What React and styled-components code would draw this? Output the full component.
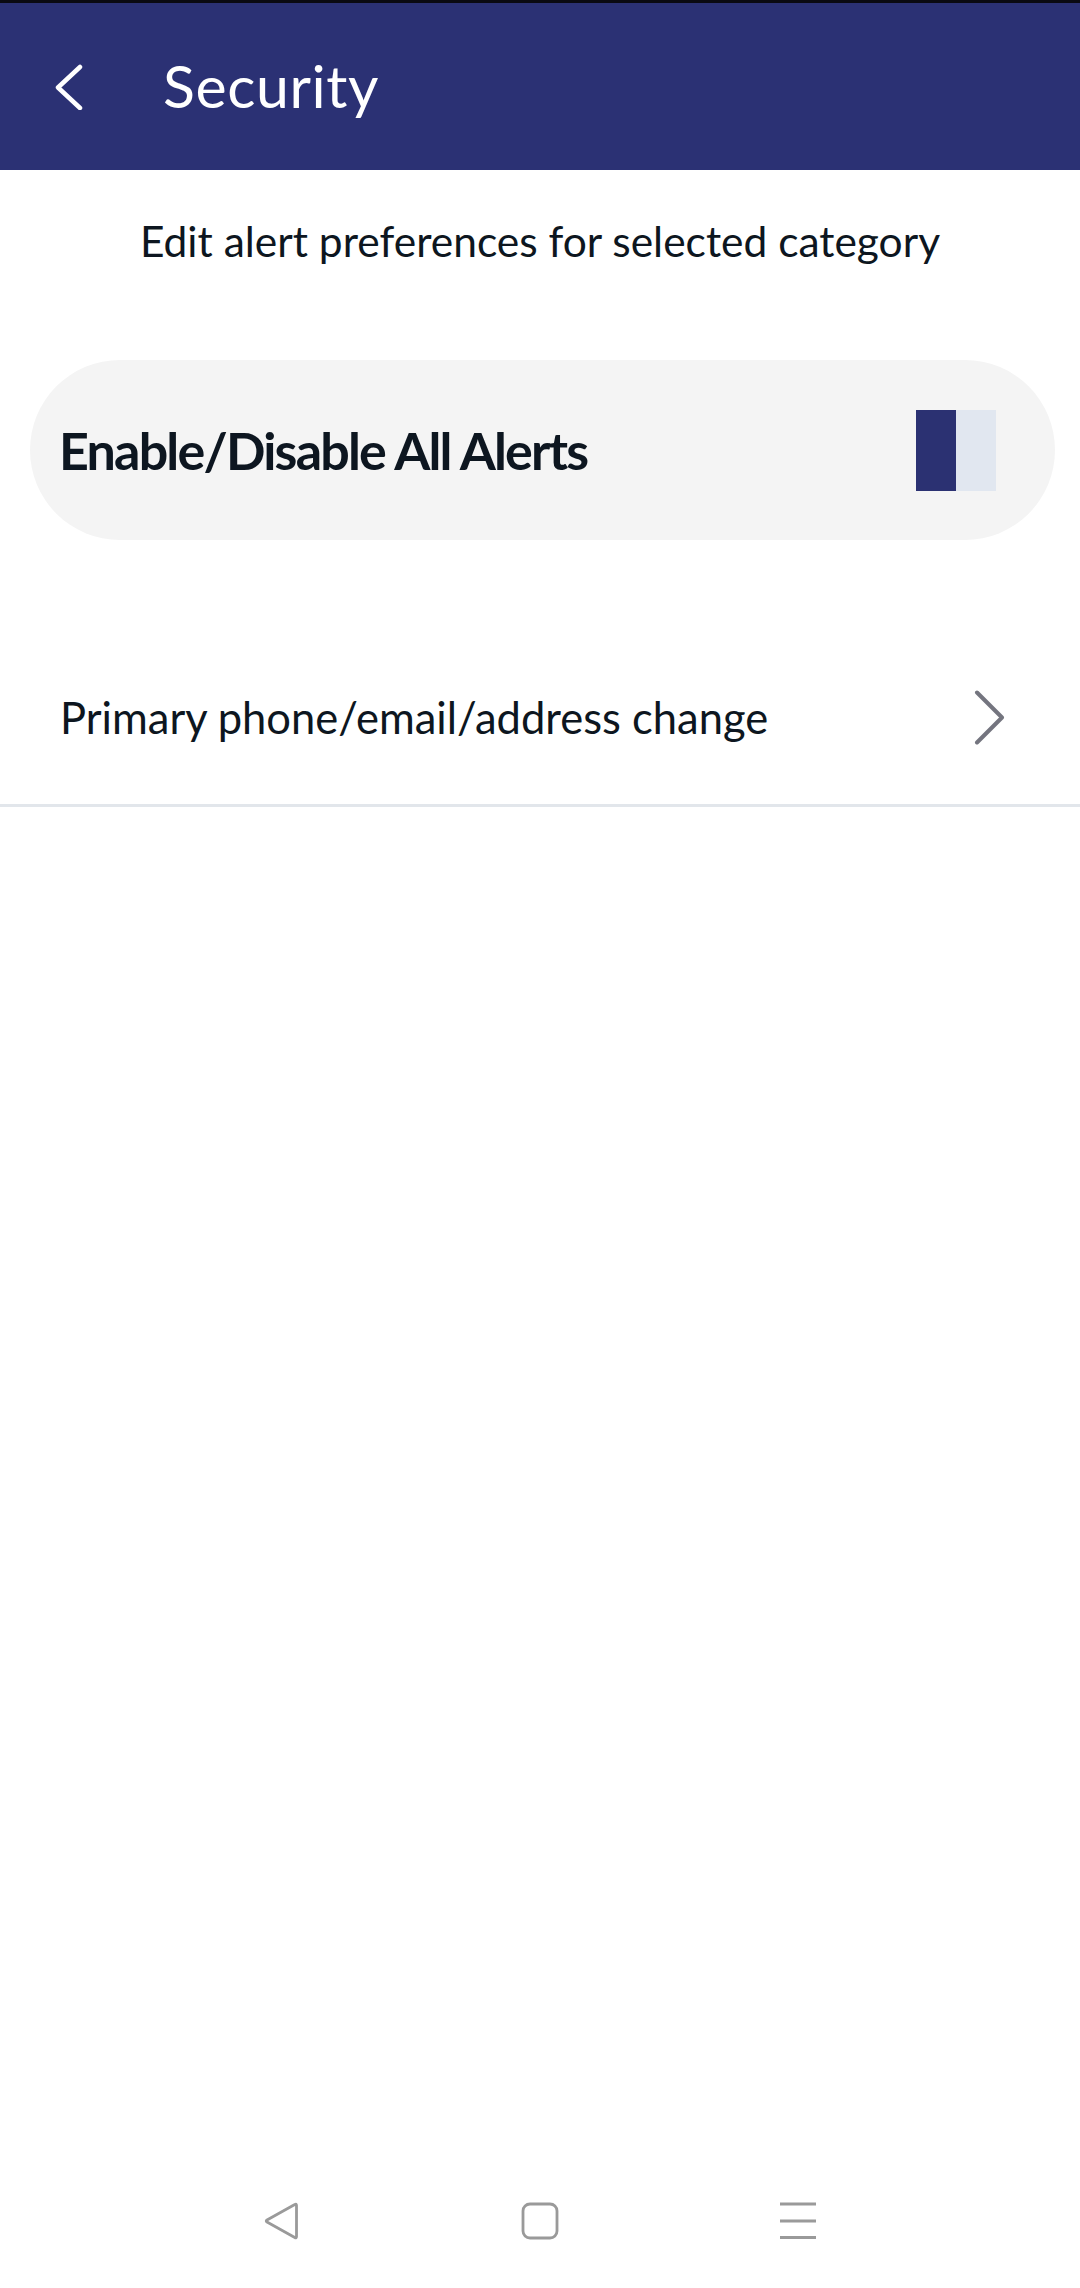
import React from 'react';
import styled, { createGlobalStyle } from 'styled-components';

const GlobalStyle = createGlobalStyle`
  html, body {
    margin: 0;
    padding: 0;
    background: #ffffff;
  }
  body {
    font-family: Lato, "Open Sans", sans-serif;
    color: #0d1620;
  }
`;

const Screen = styled.div`
  width: 1080px;
  height: 2288px;
  display: flex;
  flex-direction: column;
  background: #ffffff;
  overflow: hidden;
`;

const Header = styled.header`
  height: 167px;
  border-top: 3px solid #0a0a12;
  background: #2b3174;
  display: flex;
  align-items: center;
  padding-left: 54px;
`;

const BackButton = styled.button`
  width: 30px;
  height: 46px;
  padding: 0;
  border: none;
  background: transparent;
  display: flex;
  align-items: center;
  justify-content: center;
  margin-right: 79px;
`;

const Title = styled.h1`
  margin: 0;
  font-size: 59px;
  font-weight: 400;
  letter-spacing: 0.6px;
  color: #ffffff;
  line-height: 1.2;
`;

const Subtitle = styled.p`
  margin: 45px 0 0;
  text-align: center;
  font-size: 42.5px;
  line-height: 1.2;
`;

const Card = styled.div`
  margin: 94px 25px 0 30px;
  height: 180px;
  border-radius: 90px;
  background: #f4f4f4;
  display: flex;
  align-items: center;
  justify-content: space-between;
  padding: 0 59px 0 29px;
`;

const CardLabel = styled.span`
  font-size: 52px;
  font-weight: 700;
  line-height: 1.2;
  letter-spacing: -1.8px;
`;

const Toggle = styled.div`
  display: flex;
  height: 81px;
`;

const ToggleHalf = styled.div`
  width: 40px;
  background: ${(p) => (p.$on ? '#2b3172' : '#e1e7f0')};
`;

const Row = styled.div`
  margin-top: 90px;
  height: 174px;
  border-bottom: 3px solid #e2e6eb;
  display: flex;
  align-items: center;
  justify-content: space-between;
  padding: 0 74px 0 60px;
`;

const RowLabel = styled.span`
  font-size: 43.5px;
  line-height: 1.2;
`;

const NavBar = styled.nav`
  margin-top: auto;
  height: 102px;
  display: flex;
  justify-content: center;
  align-items: flex-start;
`;

const NavCell = styled.div`
  width: 258px;
  height: 70px;
  display: flex;
  align-items: center;
  justify-content: center;
`;

function ChevronLeft() {
  return (
    <svg width="30" height="46" viewBox="0 0 30 46">
      <path d="M26 3 L4 23.5 L26 44" fill="none" stroke="#ffffff" strokeWidth="4.5" strokeLinecap="round" strokeLinejoin="round" />
    </svg>
  );
}

function ChevronRight() {
  return (
    <svg width="33" height="55" viewBox="0 0 33 55">
      <path d="M4 2.5 L29 27.5 L4 52.5" fill="none" stroke="#74757f" strokeWidth="4" strokeLinecap="round" strokeLinejoin="round" />
    </svg>
  );
}

function NavBack() {
  return (
    <svg width="40" height="40" viewBox="0 0 40 40">
      <path d="M34.5 4.5 Q34.5 2.5 32.8 3.5 L5 19 Q3.5 20 5 21 L32.8 36.5 Q34.5 37.5 34.5 35.5 Z" fill="none" stroke="#9a9a9a" strokeWidth="2.8" strokeLinejoin="round" />
    </svg>
  );
}

function NavHome() {
  return (
    <svg width="40" height="40" viewBox="0 0 40 40">
      <rect x="3" y="3" width="34" height="34" rx="7" fill="none" stroke="#9a9a9a" strokeWidth="2.8" />
    </svg>
  );
}

function NavMenu() {
  return (
    <svg width="40" height="40" viewBox="0 0 40 40">
      <path d="M2 3 H38 M2 20 H38 M2 36.5 H38" stroke="#9a9a9a" strokeWidth="3.2" />
    </svg>
  );
}

export default function App() {
  return (
    <>
      <GlobalStyle />
      <Screen>
        <Header>
          <BackButton aria-label="Back">
            <ChevronLeft />
          </BackButton>
          <Title>Security</Title>
        </Header>
        <Subtitle>Edit alert preferences for selected category</Subtitle>
        <Card>
          <CardLabel>Enable/Disable All Alerts</CardLabel>
          <Toggle>
            <ToggleHalf $on />
            <ToggleHalf />
          </Toggle>
        </Card>
        <Row>
          <RowLabel>Primary phone/email/address change</RowLabel>
          <ChevronRight />
        </Row>
        <NavBar>
          <NavCell>
            <NavBack />
          </NavCell>
          <NavCell>
            <NavHome />
          </NavCell>
          <NavCell>
            <NavMenu />
          </NavCell>
        </NavBar>
      </Screen>
    </>
  );
}
